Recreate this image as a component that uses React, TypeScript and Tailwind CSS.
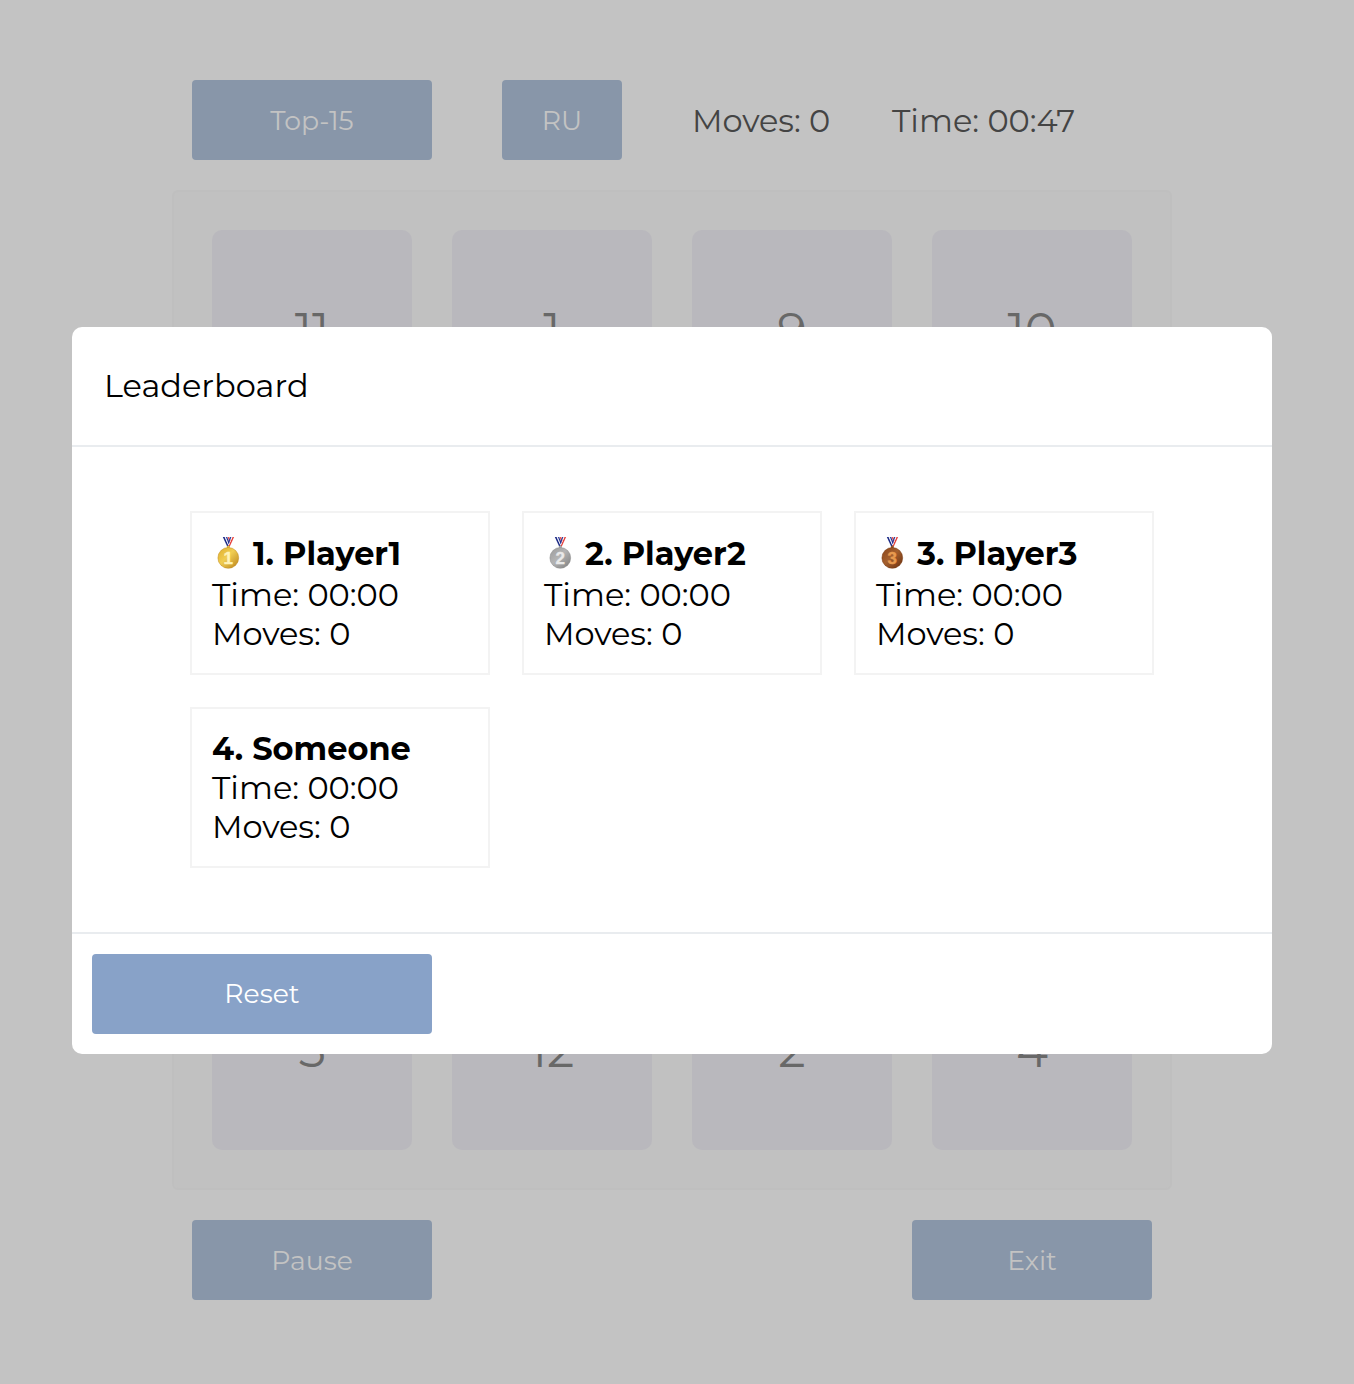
type MedalColors = { light: string; mid: string; dark: string; digit: string; edge: string };

type Player = { place: number; name: string; time: string; moves: number; medal?: MedalColors };

const players: Player[] = [
  { place: 1, name: "Player1", time: "00:00", moves: 0, medal: { light: "#f0cd52", mid: "#dfae2b", dark: "#b9811a", digit: "#fff3b8", edge: "#c08a1c" } },
  { place: 2, name: "Player2", time: "00:00", moves: 0, medal: { light: "#b4b4b4", mid: "#9b9b9b", dark: "#7d7d7d", digit: "#e9e9e9", edge: "#8a8a8a" } },
  { place: 3, name: "Player3", time: "00:00", moves: 0, medal: { light: "#a5602e", mid: "#8a4519", dark: "#6b300f", digit: "#e89a4f", edge: "#74360f" } },
  { place: 4, name: "Someone", time: "00:00", moves: 0 },
];

const tiles: (number | null)[] = [11, 1, 9, 10, null, null, null, null, null, null, null, null, 5, 12, 2, 4];

function Medal({ place, colors }: { place: number; colors: MedalColors }) {
  const id = `medal-${place}`;
  return (
    <svg className="h-[34px] w-8 shrink-0" viewBox="0 0 32 34">
      <defs>
        <linearGradient id={id} x1="0" y1="0" x2="1" y2="1">
          <stop offset="0" stopColor={colors.mid} />
          <stop offset="0.45" stopColor={colors.light} />
          <stop offset="1" stopColor={colors.dark} />
        </linearGradient>
      </defs>
      <path d="M20.4 1h1.7l-4.3 9.6h-1.6z" fill="#e6413c" />
      <path d="M19.4 1h1l-3.6 8.6h-.8z" fill="#fff" />
      <path d="M15.6 1h1.7l1 3.2-.9 2.4z" fill="#e9574f" />
      <path d="M18.2 1h1.2l-3 7.6-.8-1.4z" fill="#2a3a9a" />
      <path d="M10.8 1h1.9l4.2 9.6h-1.7z" fill="#1d2b86" />
      <path d="M12.7 1h1.2l3.1 7.4-.6 1.2z" fill="#eef0fa" />
      <path d="M13.9 1h1.3l2.2 5.8-.6 1.4z" fill="#1f2f92" />
      <circle cx="16.3" cy="11" r="1.2" fill={colors.light} stroke={colors.edge} strokeWidth="0.5" />
      <circle cx="16.3" cy="21.9" r="10.4" fill={`url(#${id})`} stroke={colors.edge} strokeWidth="0.5" />
      <text x="16.2" y="28" textAnchor="middle" className="font-['Liberation_Sans',sans-serif] text-[17px] font-bold" fill={colors.digit} stroke={colors.digit} strokeWidth="0.4">
        {place}
      </text>
    </svg>
  );
}

function Button({ label, className }: { label: string; className: string }) {
  return (
    <button type="button" className={`flex h-20 items-center justify-center rounded-[4px] text-[26.67px] font-normal ${className}`}>
      {label}
    </button>
  );
}

function PlayerCard({ player }: { player: Player }) {
  return (
    <article className="border-2 border-[#f3f3f3] p-5">
      <h3 className={player.medal ? "flex h-[42px] items-center pb-px font-bold" : "flex h-[39px] items-center font-bold"}>
        {player.medal && (
          <span className="mr-[9px] flex pb-0.5">
            <Medal place={player.place} colors={player.medal} />
          </span>
        )}
        {player.place}. {player.name}
      </h3>
      <p>Time: {player.time}</p>
      <p>Moves: {player.moves}</p>
    </article>
  );
}

export default function App() {
  return (
    <div className="relative h-[1384px] w-[1354px] overflow-hidden bg-[#c3c3c3] font-['Montserrat','Inter',sans-serif] text-[32px] leading-[39px] text-black">
      <main className="ml-[172px] flex w-[1000px] flex-col pt-20">
        <header className="flex items-center px-5 text-[#444444]">
          <Button label="Top-15" className="w-60 bg-[#8896a9] text-[#c3c3c3]" />
          <Button label="RU" className="ml-[70px] w-[120px] bg-[#8896a9] text-[#c3c3c3]" />
          <span className="ml-[70px] w-[200px] whitespace-nowrap pt-px">Moves: 0</span>
          <span className="whitespace-nowrap pt-px">Time: 00:47</span>
        </header>
        <section className="mt-[30px] grid grid-cols-4 gap-10 rounded-[6px] border-2 border-[#bfbfbf] bg-[#c1c1c1] p-[38px]">
          {tiles.map((n, i) => (
            <div key={i} className="flex h-[200px] items-center justify-center rounded-[10px] bg-[#b9b8bd] text-[48px] leading-none text-[#686868]">
              {n}
            </div>
          ))}
        </section>
        <footer className="mt-[30px] flex justify-between px-5">
          <Button label="Pause" className="w-60 bg-[#8896a9] text-[#c3c3c3]" />
          <Button label="Exit" className="w-60 bg-[#8896a9] text-[#c3c3c3]" />
        </footer>
      </main>

      <div role="dialog" className="absolute left-[72px] top-[327px] flex w-[1200px] flex-col rounded-[10px] bg-white">
        <h2 className="flex h-[120px] items-center border-b-2 border-[#e9ecef] pb-0.5 pl-8">Leaderboard</h2>
        <div className="grid grid-cols-[repeat(3,300px)] items-start justify-center gap-8 py-16">
          {players.map((p) => (
            <PlayerCard key={p.place} player={p} />
          ))}
        </div>
        <div className="border-t-2 border-[#e9ecef] p-5">
          <Button label="Reset" className="w-[340px] bg-[#88a2c8] pb-0.5 text-white" />
        </div>
      </div>
    </div>
  );
}
